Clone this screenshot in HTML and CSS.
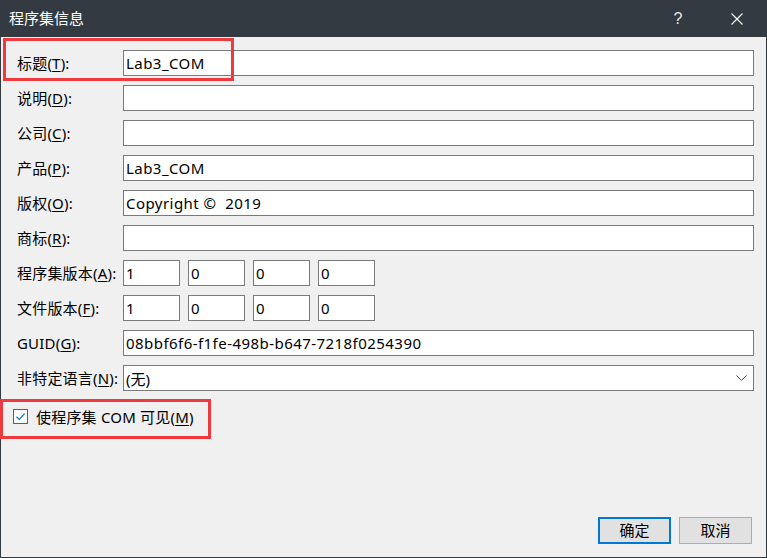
FILE: index.html
```html
<!DOCTYPE html>
<html lang="zh-CN">
<head>
<meta charset="utf-8">
<title>程序集信息</title>
<link rel="stylesheet" href="styles.css">
</head>
<body>
<div class="window">
  <div class="titlebar">
    <span class="title">程序集信息</span>
    <div class="title-buttons">
      <span class="help">?</span>
      <svg class="close" width="12" height="12" viewBox="0 0 12 12"><path d="M0.5 0.5 L11.5 11.5 M11.5 0.5 L0.5 11.5" stroke="#ffffff" stroke-width="1.1" fill="none"/></svg>
    </div>
  </div>
  <div class="content">
    <div class="form">
      <label class="lbl">标题(<u>T</u>):</label>
      <input class="field" type="text" value="Lab3_COM">
      <label class="lbl">说明(<u>D</u>):</label>
      <input class="field" type="text" value="">
      <label class="lbl">公司(<u>C</u>):</label>
      <input class="field" type="text" value="">
      <label class="lbl">产品(<u>P</u>):</label>
      <input class="field" type="text" value="Lab3_COM">
      <label class="lbl">版权(<u>O</u>):</label>
      <input class="field" type="text" value="Copyright ©  2019">
      <label class="lbl">商标(<u>R</u>):</label>
      <input class="field" type="text" value="">
      <label class="lbl">程序集版本(<u>A</u>):</label>
      <div class="versions">
        <input class="field ver" type="text" value="1">
        <input class="field ver" type="text" value="0">
        <input class="field ver" type="text" value="0">
        <input class="field ver" type="text" value="0">
      </div>
      <label class="lbl">文件版本(<u>F</u>):</label>
      <div class="versions">
        <input class="field ver" type="text" value="1">
        <input class="field ver" type="text" value="0">
        <input class="field ver" type="text" value="0">
        <input class="field ver" type="text" value="0">
      </div>
      <label class="lbl">GUID(<u>G</u>):</label>
      <input class="field" type="text" value="08bbf6f6-f1fe-498b-b647-7218f0254390">
      <label class="lbl">非特定语言(<u>N</u>):</label>
      <div class="combo">
        <span class="combo-text">(无)</span>
        <svg class="chev" width="11" height="6" viewBox="0 0 11 6"><path d="M0.5 0.5 L5.5 5.3 L10.5 0.5" stroke="#444" stroke-width="1" fill="none"/></svg>
      </div>
    </div>
    <div class="check-row">
      <span class="checkbox">
        <svg width="13" height="13" viewBox="0 0 13 13"><path d="M2.5 6.8 L5.2 9.4 L10.6 3.6" stroke="#0078d7" stroke-width="1.3" fill="none"/></svg>
      </span>
      <span class="check-label">使程序集 COM 可见(<u>M</u>)</span>
    </div>
    <div class="footer">
      <button class="btn btn-default">确定</button>
      <button class="btn">取消</button>
    </div>
  </div>
  <div class="mark mark-title"></div>
  <div class="mark mark-com"></div>
</div>
</body>
</html>
```

FILE: styles.css
```css
* { box-sizing: border-box; }
html, body {
  margin: 0;
  padding: 0;
  background: #f0f0f0;
}
body {
  font-family: "Noto Sans", "Noto Sans CJK SC", sans-serif;
  font-size: 15px;
  color: #000;
}
.window {
  position: relative;
  width: 767px;
  height: 558px;
  border: 1px solid #333a41;
  border-top: none;
  background: #f0f0f0;
  display: flex;
  flex-direction: column;
}
.titlebar {
  height: 37px;
  background: #333a41;
  color: #fff;
  display: flex;
  align-items: center;
  justify-content: space-between;
  padding-left: 9px;
  margin: 0 -1px;
}
.title {
  font-size: 15px;
  line-height: 1;
}
.title-buttons {
  display: flex;
  align-items: center;
}
.help {
  font-family: "Liberation Sans", sans-serif;
  font-size: 16px;
  color: #e8e8e8;
  width: 14px;
  text-align: center;
  margin-right: 46px;
}
.close {
  margin-right: 24px;
}
.content {
  flex: 1;
  display: flex;
  flex-direction: column;
  padding: 13px 13px 13px 16px;
}
.form {
  display: grid;
  grid-template-columns: 106px 631px;
  grid-auto-rows: 26px;
  row-gap: 9px;
  align-items: center;
}
.lbl {
  white-space: nowrap;
  line-height: 26px;
  letter-spacing: 0.2px;
}
.lbl u, .check-label u {
  text-decoration-thickness: 1px;
  text-underline-offset: 2px;
}
.field {
  height: 26px;
  width: 100%;
  border: 1px solid #7a7a7a;
  background: #fff;
  font-family: inherit;
  font-size: 15px;
  letter-spacing: 0.45px;
  color: #000;
  padding: 0 2px;
  margin: 0;
  outline: none;
}
.versions {
  display: flex;
  gap: 8px;
  height: 26px;
}
.field.ver {
  width: 57px;
  flex: 0 0 57px;
}
.combo {
  height: 26px;
  border: 1px solid #7a7a7a;
  background: #fff;
  display: flex;
  align-items: center;
  justify-content: space-between;
  padding: 0 5px 0 2px;
}
.chev {
  display: block;
  margin-right: 1px;
}
.check-row {
  display: flex;
  align-items: center;
  gap: 8px;
  margin-top: 17px;
  margin-left: -4px;
  height: 16px;
}
.checkbox {
  width: 15px;
  height: 15px;
  border: 1px solid #0078d7;
  background: #fff;
  display: flex;
  align-items: center;
  justify-content: center;
}
.checkbox svg { display: block; }
.check-label {
  letter-spacing: 0.2px;
}
.footer {
  margin-top: auto;
  display: flex;
  justify-content: flex-end;
  gap: 8px;
  padding-right: 1px;
}
.btn {
  width: 73px;
  height: 27px;
  background: #e1e1e1;
  border: 1px solid #adadad;
  font-family: inherit;
  font-size: 15px;
  color: #000;
  padding: 0;
  line-height: 1;
}
.btn-default {
  border: 2px solid #0078d7;
}
.mark {
  position: absolute;
  border: 3px solid #ee3a3c;
  pointer-events: none;
}
.mark-title {
  left: 2px;
  top: 38px;
  width: 231px;
  height: 43px;
}
.mark-com {
  left: -1px;
  top: 399px;
  width: 211px;
  height: 40px;
}
```
